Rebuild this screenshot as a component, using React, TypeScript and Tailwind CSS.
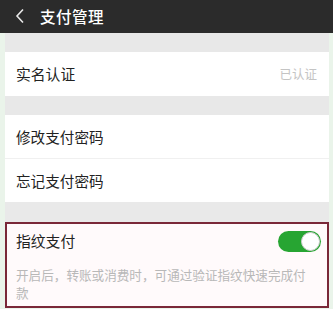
export default function App() {
  const font = { fontFamily: '"Noto Sans CJK SC", "Noto Sans", sans-serif' };
  return (
    <div
      className="flex h-[309px] w-[333px] flex-col overflow-hidden bg-[#eaf4ea]"
      style={font}
    >
      <header className="flex h-[33px] shrink-0 items-center bg-[#2b2b2b] pl-[15px] pr-1 text-white">
        <svg width="10" height="16" viewBox="0 0 10 16" fill="none" className="mb-[2px]">
          <path d="M8 1.5L2 8l6 6.5" stroke="#e8e8e8" strokeWidth="1.6" />
        </svg>
        <span className="ml-[15px] text-[15.5px] font-medium leading-none tracking-[0.5px]">
          支付管理
        </span>
      </header>

      <div className="flex flex-1 flex-col pl-[5px] pr-[4px]">
        <div className="h-[19px] bg-[#e8e8e8]" />

        <div className="flex h-[44px] items-center justify-between bg-white pl-[11px] pr-[12px]">
          <span className="text-[14.8px] text-[#222]">实名认证</span>
          <span className="text-[12.5px] text-[#c4c4c4]">已认证</span>
        </div>

        <div className="h-[19px] bg-[#e8e8e8]" />

        <div className="flex flex-col bg-white">
          <div className="flex h-[44px] items-center border-b border-[#f0f0f0] pl-[11px]">
            <span className="text-[14.6px] text-[#222]">修改支付密码</span>
          </div>
          <div className="flex h-[43px] items-center pl-[11px]">
            <span className="text-[14.6px] text-[#222]">忘记支付密码</span>
          </div>
        </div>

        <div className="h-[20px] bg-[#e9e9e9]" />

        <div className="flex h-[86px] flex-col border-2 border-[#7a2838] bg-[#fffafb] pl-[9px] pr-[6px]">
          <div className="mt-[5px] flex h-[24px] items-center justify-between">
            <span className="text-[14.8px] text-[#222]">指纹支付</span>
            <div className="flex h-[21px] w-[43px] items-center justify-end rounded-full bg-[#27a532] pr-[1px]">
              <div className="h-[19px] w-[19px] rounded-full border border-[#cfcfcf] bg-white" />
            </div>
          </div>
          <p className="mt-[13px] w-[300px] text-[12.6px] leading-[18px] text-[#b8b8b8]">
            开启后，转账或消费时，可通过验证指纹快速完成付款
          </p>
        </div>
      </div>
    </div>
  );
}
